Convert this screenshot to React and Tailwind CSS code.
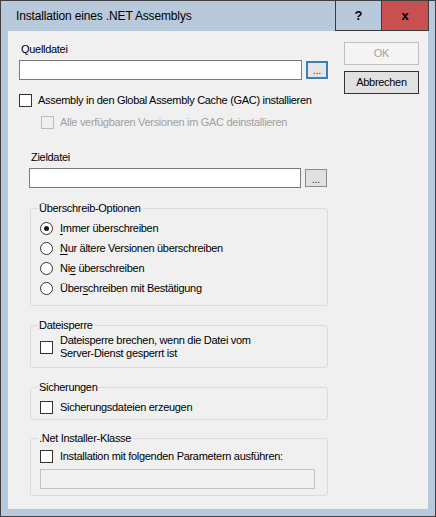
import React from 'react';

const font = "font-['Liberation_Sans',Arial,sans-serif]";

function TextBox({ className = '', disabled }) {
  return (
    <div
      className={`shrink-0 h-[20px] border ${disabled ? 'border-[#c2c2c2] bg-[#f0f0f0]' : 'border-[#7a7a7a] bg-white'} ${className}`}
    />
  );
}

function BrowseButton({ focused }) {
  return (
    <div
      className={`shrink-0 w-[22px] h-[18px] mt-[1px] ml-[4px] flex items-end justify-center pb-[3px] text-[11px] leading-[8px] ${
        focused ? 'border-2 border-[#3c7fb1] bg-[#e5e5e5]' : 'border border-[#8a8a8a] bg-[#e1e1e1]'
      } text-[#4a2a6a]`}
    >
      ...
    </div>
  );
}

function Check({ disabled }) {
  return (
    <span
      className={`block shrink-0 w-[13px] h-[13px] border ${
        disabled ? 'border-[#bcbcbc] bg-[#f0f0f0]' : 'border-[#333333] bg-white'
      }`}
    />
  );
}

function Radio({ checked }) {
  return (
    <span className="flex shrink-0 items-center justify-center w-[13px] h-[13px] rounded-full border border-[#333333] bg-white">
      {checked && <span className="block w-[5px] h-[5px] rounded-full bg-[#1a1a1a]" />}
    </span>
  );
}

function Group({ title, className = '', children }) {
  return (
    <div className={`relative w-[298px] ml-[11px] border border-[#dcdcdc] rounded-[3px] pl-[9px] ${className}`}>
      <span className="absolute left-[7px] top-[-7px] px-[1px] bg-[#f0f0f0] leading-[13px]">{title}</span>
      {children}
    </div>
  );
}

const RADIOS = [
  { pre: '', key: 'I', post: 'mmer überschreiben', checked: true },
  { pre: '', key: 'N', post: 'ur ältere Versionen überschreiben' },
  { pre: 'Ni', key: 'e', post: ' überschreiben' },
  { pre: 'Über', key: 's', post: 'chreiben mit Bestätigung' },
];

export default function App() {
  return (
    <div className={`w-[436px] h-[517px] border border-[#404040] bg-[#b9c9dc] flex flex-col ${font}`}>
      {/* Title bar */}
      <div className="h-[30px] flex items-stretch shrink-0">
        <div className="flex-1 flex items-center pl-[15px] text-[12px] tracking-[-0.15px] text-black">
          Installation eines .NET Assemblys
        </div>
        <div className="flex mr-[6px] border-x border-b border-[#3a3a3a]">
          <div className="w-[46px] flex items-center justify-center font-bold text-[13px] text-black border-r border-[#3a3a3a]">
            ?
          </div>
          <div className="w-[46px] flex items-center justify-center bg-[#c75050] font-bold text-[13px] text-black">
            x
          </div>
        </div>
      </div>

      {/* Client area */}
      <div className="mx-[7px] h-[478px] bg-[#f0f0f0] flex text-[11px] leading-[13px] tracking-[-0.3px] text-black">
        <div className="w-[320px] shrink-0 pl-[11px] flex flex-col">
          <div className="ml-[2px] mt-[12px]">Quelldatei</div>
          <div className="flex mt-[4px]">
            <TextBox className="w-[283px]" />
            <BrowseButton focused />
          </div>

          <div className="flex items-center gap-[6px] mt-[14px] h-[13px] whitespace-nowrap">
            <Check />
            <span>Assembly in den Global Assembly Cache (GAC) installieren</span>
          </div>
          <div className="flex items-center gap-[6px] mt-[9px] ml-[22px] h-[13px] whitespace-nowrap text-[#a0a0a0]">
            <Check disabled />
            <span>Alle verfügbaren Versionen im GAC deinstallieren</span>
          </div>

          <div className="ml-[12px] mt-[22px]">Zieldatei</div>
          <div className="flex mt-[4px] ml-[10px]">
            <TextBox className="w-[272px]" />
            <BrowseButton />
          </div>

          <Group title="Überschreib-Optionen" className="mt-[20px] pt-[13px] pb-[10px]">
            <div className="flex flex-col gap-[7px]">
              {RADIOS.map((r) => (
                <div key={r.post} className="flex items-center gap-[7px] h-[13px]">
                  <Radio checked={r.checked} />
                  <span>
                    {r.pre}
                    <span className="underline underline-offset-[2px]">{r.key}</span>
                    {r.post}
                  </span>
                </div>
              ))}
            </div>
          </Group>

          <Group title="Dateisperre" className="mt-[19px] pt-[8px] pb-[7px]">
            <div className="flex items-center gap-[7px]">
              <Check />
              <span>
                Dateisperre brechen, wenn die Datei vom
                <br />
                Server-Dienst gesperrt ist
              </span>
            </div>
          </Group>

          <Group title="Sicherungen" className="mt-[19px] pt-[13px] pb-[5px]">
            <div className="flex items-center gap-[7px] h-[13px]">
              <Check />
              <span>Sicherungsdateien erzeugen</span>
            </div>
          </Group>

          <Group title=".Net Installer-Klasse" className="mt-[18px] pt-[11px] pb-[6px]">
            <div className="flex items-center gap-[7px] h-[13px]">
              <Check />
              <span>Installation mit folgenden Parametern ausführen:</span>
            </div>
            <TextBox disabled className="w-[275px] mt-[6px]" />
          </Group>
        </div>

        {/* Dialog buttons */}
        <div className="ml-[16px] flex flex-col">
          <div className="mt-[11px] w-[75px] h-[23px] flex items-center justify-center border border-[#bfbfbf] bg-[#f4f4f4] text-[#a3a3a3]">
            OK
          </div>
          <div className="mt-[6px] w-[75px] h-[23px] flex items-center justify-center border border-[#333333] bg-[#e1e1e1]">
            Abbrechen
          </div>
        </div>
      </div>
    </div>
  );
}
